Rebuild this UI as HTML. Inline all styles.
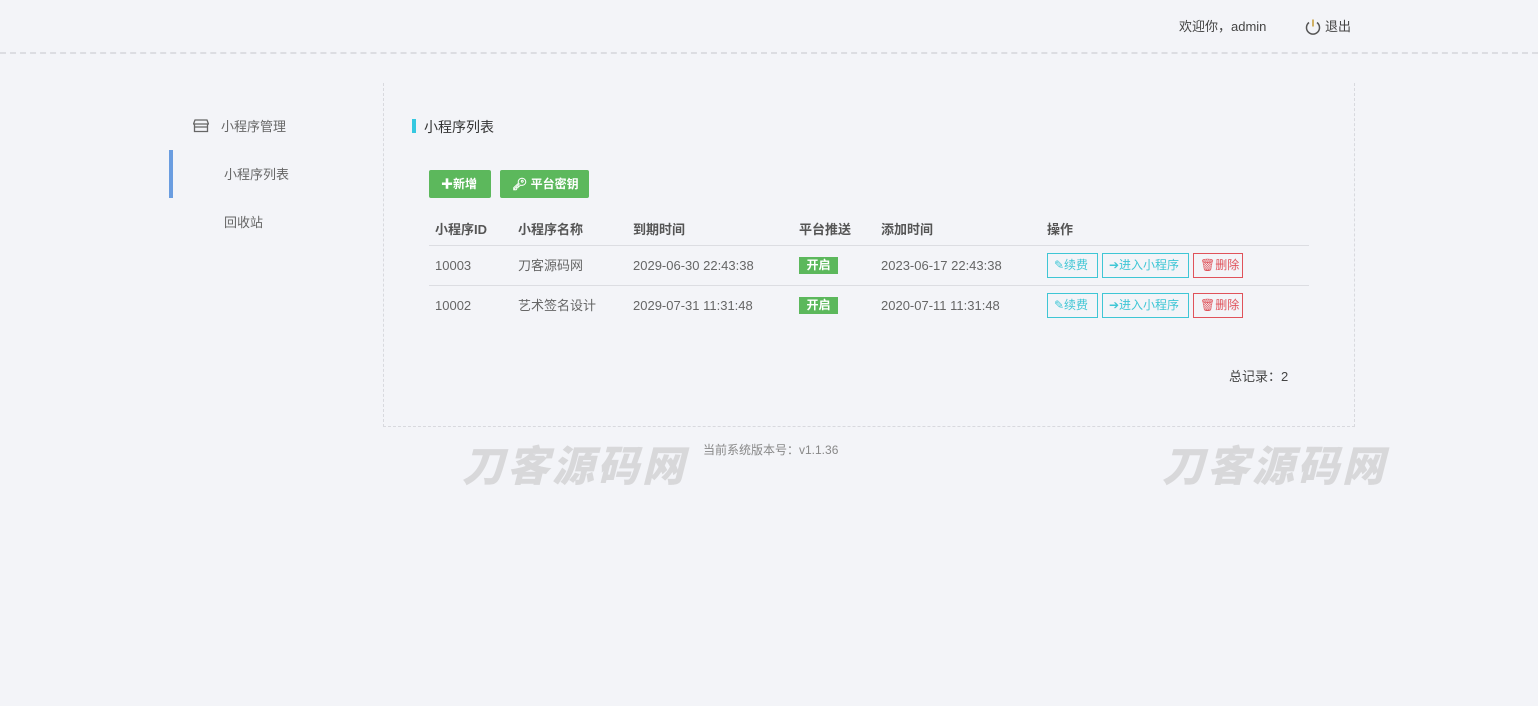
<!DOCTYPE html>
<html><head><meta charset="utf-8"><style>
*{margin:0;padding:0;box-sizing:border-box}
body{width:1538px;height:706px;background:#f3f4f8;font-family:"Liberation Sans","Noto Sans CJK SC",sans-serif;color:#555;position:relative;overflow:hidden;font-size:13px}
.abs{position:absolute;white-space:nowrap;line-height:18px}
.hdr{position:absolute;left:0;top:52px;width:1538px;border-top:2px dashed #dcdde2}
.panel{position:absolute;left:383px;top:83px;width:972px;height:344px;border-left:1px dashed #d8d9de;border-right:1px dashed #d8d9de;border-bottom:1px dashed #d8d9de}
.btn{position:absolute;top:170px;height:28px;background:#5cb85c;color:#fff;border-radius:2px;font-size:12px;line-height:28px;font-weight:bold}
.th{top:221px;font-weight:bold;color:#555;font-size:13px}
.line{position:absolute;left:429px;width:880px;border-top:1px solid #dcdde2}
.tag{position:absolute;width:39px;height:17px;background:#5cb85c;color:#fff;font-weight:bold;font-size:12px;text-align:center;line-height:17px}
.ob{position:absolute;height:25px;border:1px solid #3fc6d5;color:#3fc6d5;font-size:12px;line-height:23px;padding-left:6px}
.ob.r{border-color:#e0525a;color:#e0525a}
.wm{font-size:42px;line-height:48px;font-weight:900;font-style:italic;color:#d8d8da;letter-spacing:3px}
</style></head><body>
<div class="abs" style="left:1179px;top:18px;color:#444">欢迎你，admin</div>
<svg class="abs" style="left:1304px;top:18px" width="18" height="18" viewBox="0 0 18 18"><path d="M5 4.5A6.5 6.5 0 1 0 13 4.5" fill="none" stroke="#555" stroke-width="1.5"/><path d="M9 1.5v7" stroke="#c8a040" stroke-width="1.6"/></svg>
<div class="abs" style="left:1325px;top:18px;color:#444">退出</div>
<div class="hdr"></div>

<svg class="abs" style="left:193px;top:118px" width="16" height="15" viewBox="0 0 16 15"><path d="M2 2h12l1.5 4H.5z M1.5 6v7.5h13V6 M1.5 9h13" fill="none" stroke="#666" stroke-width="1.3"/></svg>
<div class="abs" style="left:221px;top:118px;color:#666">小程序管理</div>
<div class="abs" style="left:169px;top:150px;width:4px;height:48px;background:#6a9de0"></div>
<div class="abs" style="left:224px;top:166px;color:#666">小程序列表</div>
<div class="abs" style="left:224px;top:214px;color:#666">回收站</div>

<div class="panel"></div>
<div class="abs" style="left:412px;top:119px;width:4px;height:14px;background:#35c8e0"></div>
<div class="abs" style="left:424px;top:118px;color:#333;font-size:14px">小程序列表</div>

<div class="btn" style="left:429px;width:62px;padding-left:12px">✚新增</div>
<div class="btn" style="left:500px;width:89px;padding-left:12px">🔑︎ 平台密钥</div>

<div class="abs th" style="left:435px">小程序ID</div>
<div class="abs th" style="left:518px">小程序名称</div>
<div class="abs th" style="left:633px">到期时间</div>
<div class="abs th" style="left:799px">平台推送</div>
<div class="abs th" style="left:881px">添加时间</div>
<div class="abs th" style="left:1047px">操作</div>
<div class="line" style="top:245px"></div>
<div class="line" style="top:285px"></div>

<div class="abs" style="left:435px;top:257px;color:#666">10003</div>
<div class="abs" style="left:518px;top:257px;color:#666">刀客源码网</div>
<div class="abs" style="left:633px;top:257px;color:#666">2029-06-30 22:43:38</div>
<div class="tag" style="left:799px;top:257px">开启</div>
<div class="abs" style="left:881px;top:257px;color:#666">2023-06-17 22:43:38</div>
<div class="ob" style="left:1047px;top:253px;width:51px">✎续费</div>
<div class="ob" style="left:1102px;top:253px;width:87px">➔进入小程序</div>
<div class="ob r" style="left:1193px;top:253px;width:50px">🗑︎删除</div>

<div class="abs" style="left:435px;top:297px;color:#666">10002</div>
<div class="abs" style="left:518px;top:297px;color:#666">艺术签名设计</div>
<div class="abs" style="left:633px;top:297px;color:#666">2029-07-31 11:31:48</div>
<div class="tag" style="left:799px;top:297px">开启</div>
<div class="abs" style="left:881px;top:297px;color:#666">2020-07-11 11:31:48</div>
<div class="ob" style="left:1047px;top:293px;width:51px">✎续费</div>
<div class="ob" style="left:1102px;top:293px;width:87px">➔进入小程序</div>
<div class="ob r" style="left:1193px;top:293px;width:50px">🗑︎删除</div>

<div class="abs" style="left:1229px;top:368px;color:#444">总记录：2</div>
<div class="abs" style="left:703px;top:441px;color:#888;font-size:12px">当前系统版本号：v1.1.36</div>
<div class="abs wm" style="left:462px;top:443px">刀客源码网</div>
<div class="abs wm" style="left:1162px;top:443px">刀客源码网</div>
</body></html>
